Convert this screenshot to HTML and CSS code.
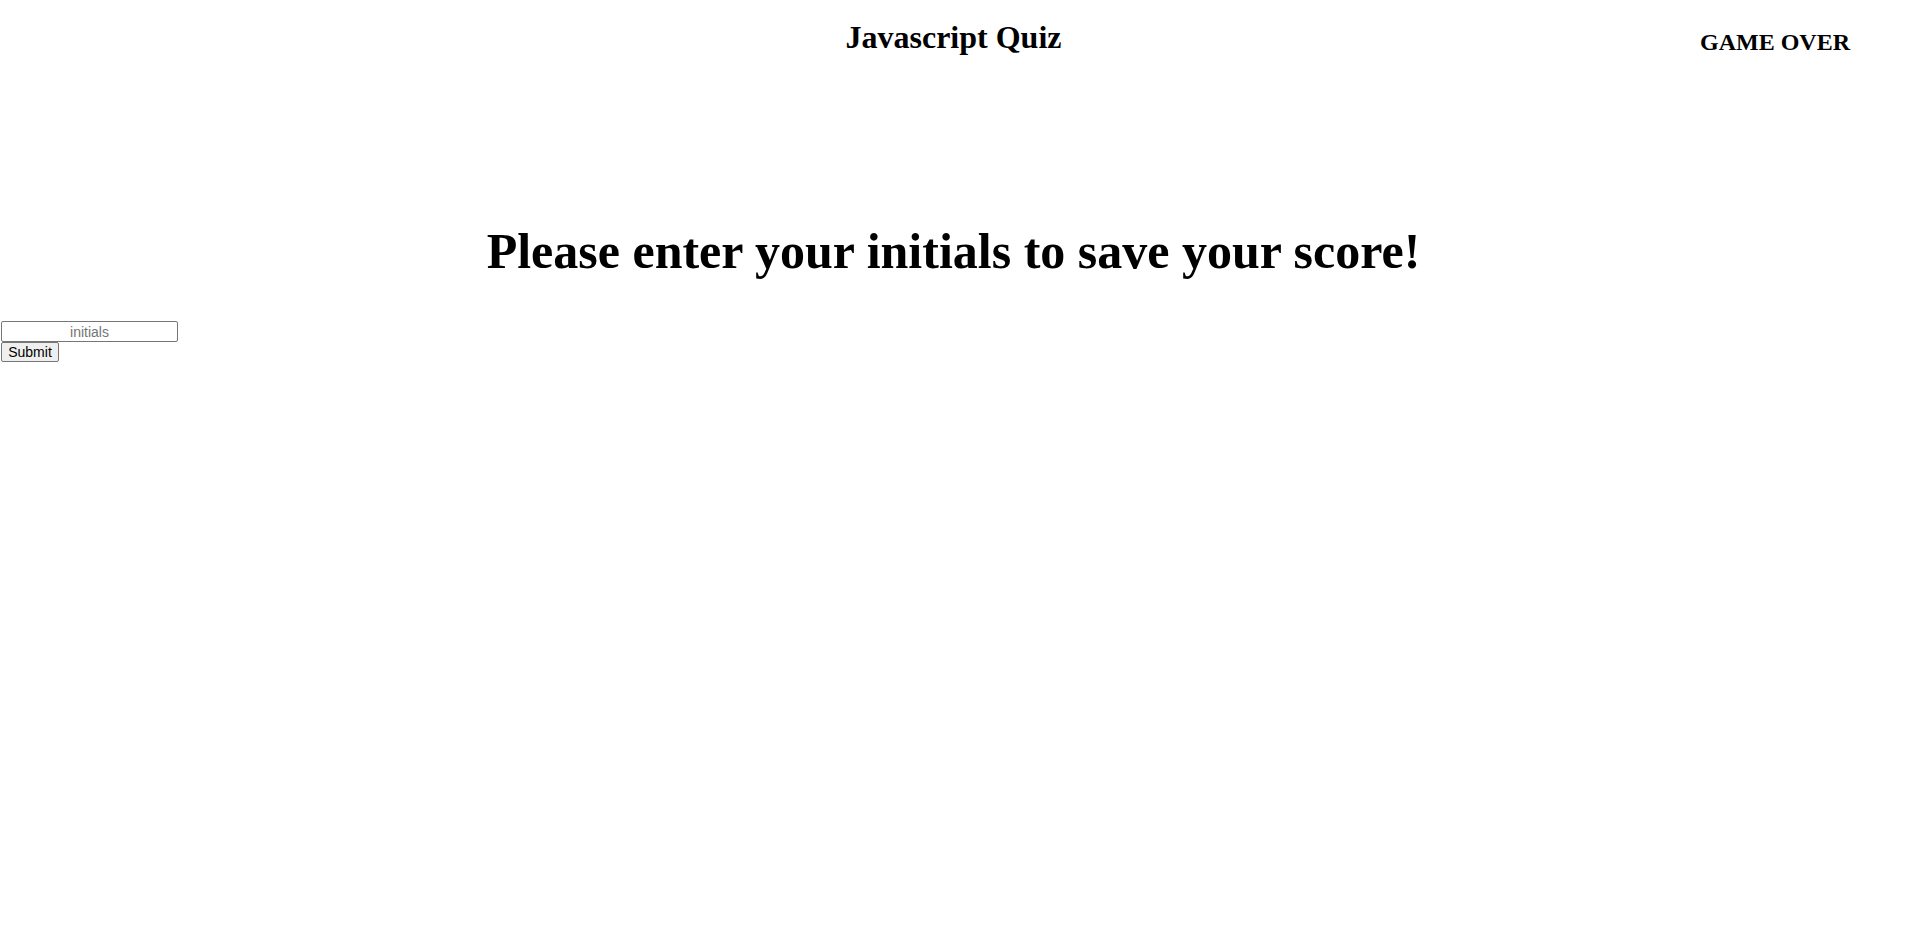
FILE: index.html
```html
<!DOCTYPE html>
<html>
<head>
<meta charset="utf-8">
<title>Javascript Quiz</title>
<link rel="stylesheet" href="styles.css">
</head>
<body>
<header class="top">
  <div class="spacer"></div>
  <h1 class="title">Javascript Quiz</h1>
  <div class="status">GAME OVER</div>
</header>
<main class="content">
  <h2 class="prompt">Please enter your initials to save your score!</h2>
  <form class="score-form">
    <input class="initials" type="text" placeholder="initials">
    <button class="submit" type="button">Submit</button>
  </form>
</main>
</body>
</html>
```
FILE: styles.css
```css
html, body {
  margin: 0;
  padding: 0;
  background: #ffffff;
  color: #000000;
  font-family: "Liberation Serif", "Times New Roman", serif;
}

.top {
  display: grid;
  grid-template-columns: 1fr auto 1fr;
  align-items: start;
}

.title {
  margin: 0;
  padding-top: 19px;
  font-size: 32px;
  font-weight: bold;
  text-align: center;
}

.status {
  justify-self: end;
  padding-top: 29px;
  padding-right: 57px;
  font-size: 24px;
  font-weight: bold;
}

.content {
  padding-top: 166px;
}

.prompt {
  margin: 0;
  text-align: center;
  font-size: 50px;
  font-weight: bold;
}

.score-form {
  display: flex;
  flex-direction: column;
  align-items: flex-start;
  padding-top: 41px;
  padding-left: 1px;
}

.initials {
  box-sizing: border-box;
  width: 177px;
  height: 21px;
  margin: 0;
  padding: 1px 2px;
  border: 1px solid #767676;
  border-radius: 2px;
  font-family: "Liberation Sans", Arial, sans-serif;
  font-size: 14px;
  text-align: center;
}

.initials::placeholder {
  color: #757575;
}

.submit {
  box-sizing: border-box;
  width: 58px;
  height: 20px;
  margin: 0;
  padding: 1px 4px;
  border: 1px solid #767676;
  border-radius: 2px;
  background: #efefef;
  font-family: "Liberation Sans", Arial, sans-serif;
  font-size: 14px;
  color: #000;
}
```
